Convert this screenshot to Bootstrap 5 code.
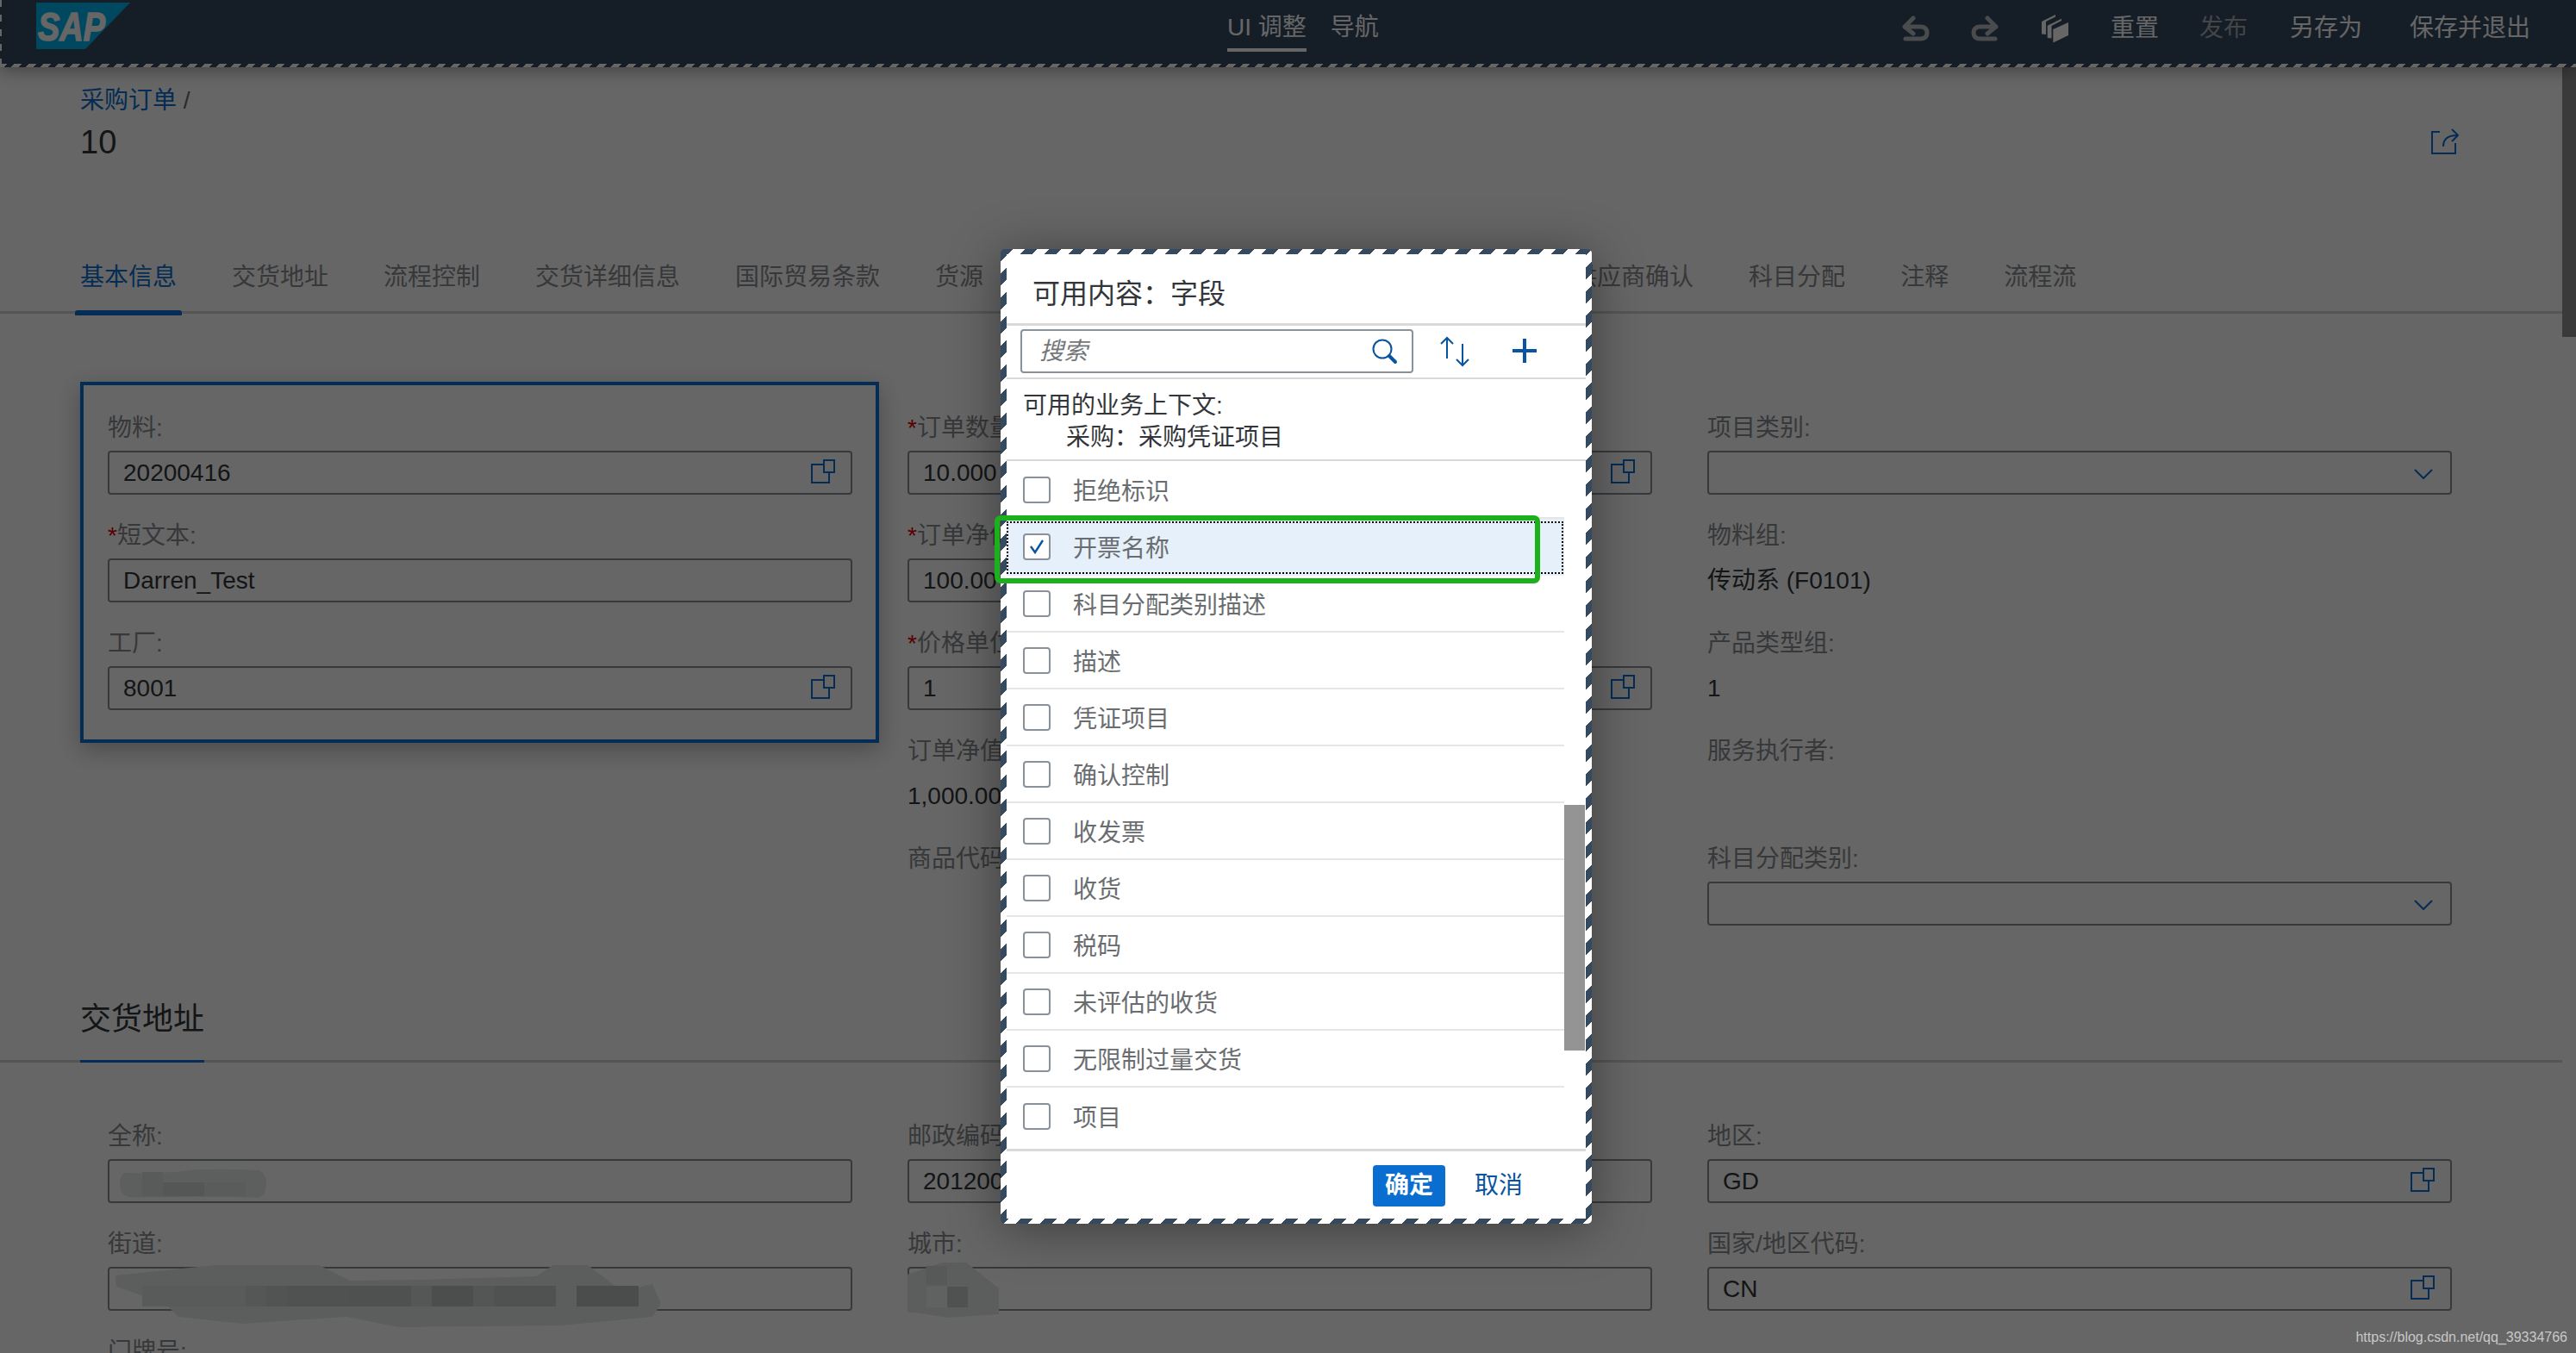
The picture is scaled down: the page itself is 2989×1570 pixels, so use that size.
<!DOCTYPE html>
<html lang="zh-CN">
<head>
    <meta charset="UTF-8">
    <meta name="viewport" content="width=device-width, initial-scale=1.0">
    <title>采购订单</title>
    <link href="https://cdn.jsdelivr.net/npm/bootstrap@5.3.3/dist/css/bootstrap.min.css" rel="stylesheet">
    <style>
        html, body { height: 100%; overflow: hidden; }
        body { background: #fff; color: #32363a; font-family: "Liberation Sans", "Noto Sans CJK SC", sans-serif; font-size: 28px; line-height: 34px; }
        .page-shell { height: 1570px; }

        /* shell bar */
        .shell-bar { height: 78px; flex: none; background: #354a63; color: #fff; position: relative; z-index: 2; box-shadow: 0 4px 18px rgba(0,0,0,.35); }
        .shell-bar::after { content: ""; position: absolute; left: 0; right: 0; bottom: 0; height: 4px; background: repeating-linear-gradient(135deg, #fff 0 6px, transparent 6px 12px); }
        .shell-bar::before { content: ""; position: absolute; left: 0; top: 0; bottom: 0; width: 2px; background: repeating-linear-gradient(180deg, #fff 0 8px, transparent 8px 17px); }
        .shell-left { width: 1424px; padding-left: 42px; align-self: flex-start; padding-top: 3px; }
        .shell-tab { margin-top: 15px; padding-bottom: 7px; margin-right: 28px; align-self: flex-start; color: #fff; }
        .shell-tab-on { border-bottom: 4px solid #fff; }
        .shell-actions { padding-right: 53px; padding-bottom: 12px; }
        .shell-actions svg { display: block; }
        .act-undo { margin-right: 48px; }
        .act-redo { margin-right: 50px; }
        .act-stack { margin-right: 48px; }
        .act-text { margin-right: 47px; }
        .act-off { color: #a8acb0; margin-right: 49px; }
        .act-gap { margin-right: 55px; }

        /* object page */
        .main-area { min-width: 0; }
        .page-head { padding: 22px 120px 0 93px; }
        .crumb-link { color: #0a6ed1; text-decoration: none; }
        .crumb-sep { color: #6a6d70; }
        .object-title { font-size: 38px; line-height: 46px; margin-top: 8px; color: #32363a; }
        .share-ico { margin-top: 49px; }
        .tab-bar { margin-top: 117px; padding-left: 93px; padding-bottom: 22px; gap: 64px; border-bottom: 3px solid #d4d4d4; flex-wrap: nowrap; }
        .tab-bar .nav-link { padding: 0; color: #8a8d90; position: relative; white-space: nowrap; }
        .tab-bar .nav-link.active { color: #0a6ed1; }
        .tab-bar .nav-link.active::after { content: ""; position: absolute; left: -6px; right: -6px; bottom: -27px; height: 6px; background: #0a6ed1; border-radius: 3px 3px 0 0; }
        .tab-spacer { width: 556px; flex: none; }
        .form-grid { grid-template-columns: repeat(3, 864px); column-gap: 64px; margin-left: 125px; margin-top: 116px; }
        .field-row { height: 125px; }
        .sap-label { display: block; color: #8a8d90; margin-bottom: 9px; white-space: nowrap; }
        .req { color: #e00000; }
        .sap-input { height: 51px; padding: 0 18px 0 16px; border: 2px solid #89919a; border-radius: 4px; background: #fff; color: #32363a; font-size: 28px; line-height: 34px; position: relative; }
        .sap-input-short { width: 460px; }
        .field-value { margin-top: 18px; color: #32363a; }
        .focus-box { margin: -37px -31px 0 -32px; padding: 33px 27px 3px 28px; border: 4px solid #0a6ed1; box-shadow: 0 8px 26px rgba(0,0,0,.28); }
        .ico-copy { width: 28px; height: 28px; flex: none; margin-top: -4px; }
        .ico-down { width: 22px; height: 12px; flex: none; margin: 3px 2px 0 0; }
        .section-title { margin-top: 56px; border-bottom: 3px solid #d4d4d4; padding-left: 93px; }
        .section-title span { display: inline-block; font-size: 36px; line-height: 44px; padding-bottom: 25px; margin-bottom: -3px; border-bottom: 3px solid #0a6ed1; color: #32363a; }
        .form-grid-addr { margin-top: 69px; }
        .smudge { position: absolute; overflow: visible; pointer-events: none; }
        .smudge-name { left: 12px; top: 9px; }
        .smudge-street { left: 7px; top: -4px; }
        .smudge-city { left: -2px; top: -7px; }
        .page-scroll { width: 16px; flex: none; }
        .page-thumb { height: 313px; background: #919191; }

        /* dim layer and dialog */
        .dim-layer { position: absolute; inset: 0; background: rgba(0,0,0,.6); z-index: 5; }
        .dialog-frame { position: absolute; left: 1161px; top: 289px; width: 686px; height: 1131px; padding: 6px 7px; z-index: 6; border-radius: 5px; background: repeating-linear-gradient(135deg, #354a5f 0 9.9px, #fff 9.9px 19.8px); box-shadow: 0 6px 60px rgba(0,0,0,.4); }
        .dialog-body { height: 100%; background: #fff; }
        .dialog-title { height: 83px; padding: 29px 0 0 30px; font-size: 32px; line-height: 34px; border-bottom: 3px solid #d9d9d9; }
        .search-row { height: 62px; padding: 4px 0 0 16px; border-bottom: 2px solid #d9d9d9; }
        .search-box { width: 456px; height: 51px; padding: 0 16px 0 20px; border: 2px solid #89919a; border-radius: 4px; }
        .search-hint { font-style: italic; color: #74777a; }
        .tool-sort { margin: 8px 0 0 30px; }
        .tool-plus { margin: 10px 0 0 48px; }
        .context-box { height: 95px; padding: 12px 0 0 19px; line-height: 37px; border-bottom: 2px solid #d9d9d9; }
        .context-sub { padding-left: 50px; }
        .list-wrap { height: 798px; padding-top: 1px; overflow: hidden; }
        .field-list { width: 647px; flex: none; }
        .field-list .list-group-item { height: 66px; padding: 6px 0 0 19px; border: 0; border-bottom: 2px solid #e5e5e5; border-radius: 0; color: #6a6d70; position: relative; background: #fff; }
        .field-list .list-group-item.row-on { background: #e5f0fa; border-bottom-color: #e5f0fa; }
        .field-list .list-group-item.row-on::after { content: ""; position: absolute; left: 0; right: 1px; top: 3px; bottom: 0; border: 2px dotted #000; }
        .field-list .form-check-input { width: 32px; height: 31px; margin: -6px 26px 0 0; border: 2px solid #89919a; border-radius: 4px; flex: none; background-color: #fff; }
        .field-list .form-check-input:checked { background-color: #fff; border-color: #89919a; background-size: 18px; background-image: url("data:image/svg+xml,%3csvg xmlns='http://www.w3.org/2000/svg' viewBox='0 0 18 18'%3e%3cpath fill='none' stroke='%230854a0' stroke-width='2.4' d='M2 9l5 7 9-14'/%3e%3c/svg%3e"); }
        .list-track { width: 25px; flex: none; }
        .list-thumb { width: 24px; height: 285px; margin-top: 398px; background: #949494; }
        .dialog-foot { height: 78px; padding: 5px 73px 0 0; gap: 34px; border-top: 3px solid #d9d9d9; }
        .btn-ok.btn { width: 84px; height: 48px; padding: 0; font-size: 28px; line-height: 34px; font-weight: 700; background: #0a6ed1; border: 0; border-radius: 4px; color: #fff; }
        .btn-no.btn { padding: 0; font-size: 28px; line-height: 34px; color: #0854a0; border: 0; text-decoration: none; }
        .green-mark { position: absolute; left: 1154px; top: 598px; width: 633px; height: 79px; border: 6px solid #1db01d; border-radius: 7px; z-index: 7; }
        .source-url { position: absolute; right: 10px; top: 1543px; font-size: 16px; line-height: 18px; color: #c8c8c8; z-index: 7; }
    </style>
</head>
<body class="position-relative">

<svg width="0" height="0" class="position-absolute">
    <symbol id="i-copy" viewBox="0 0 28 28">
        <path fill="none" stroke="#0a6ed1" stroke-width="2" d="M14 6H1v21h20V15M15 1h12v14H15z"/>
    </symbol>
    <symbol id="i-down" viewBox="0 0 22 12">
        <path fill="none" stroke="#0a6ed1" stroke-width="2" d="M1 1l10 10L21 1"/>
    </symbol>
</svg>

<div class="page-shell d-flex flex-column overflow-hidden">

    <header class="shell-bar d-flex align-items-center">
        <div class="shell-left">
            <svg width="110" height="54" viewBox="0 0 110 54">
                <polygon points="0,0 109,0 57,54 0,54" fill="#00b4f0"/>
                <text x="2" y="44" font-family="Liberation Sans" font-weight="700" font-style="italic" font-size="47" fill="#fff" stroke="#fff" stroke-width="1.500" textLength="78" lengthAdjust="spacingAndGlyphs">SAP</text>
            </svg>
        </div>
        <div class="shell-tab shell-tab-on">UI 调整</div>
        <div class="shell-tab">导航</div>
        <div class="shell-actions ms-auto d-flex align-items-center">
            <svg class="act-undo" width="32" height="30" viewBox="0 0 32 30"><path fill="none" stroke="#b8bcc0" stroke-width="5" stroke-linecap="round" stroke-linejoin="round" d="M13 3L3 13l10 8M3 13h18q8 0 8 7t-8 7H4"/></svg>
            <svg class="act-redo" width="32" height="30" viewBox="0 0 32 30"><path fill="none" stroke="#b8bcc0" stroke-width="5" stroke-linecap="round" stroke-linejoin="round" d="M19 3l10 10-10 8M29 13H11q-8 0-8 7t8 7h17"/></svg>
            <svg class="act-stack" width="32" height="33" viewBox="0 0 32 33"><path fill="#fff" d="M13.300 17L31 9v15l-17.700 8.500zM6.700 12.700L23 4.700V7l-11.500 6v14.500l-4.800-.5zM0 8l16-8v2.500L5 8v15l-5-.5z"/></svg>
            <span class="act-text">重置</span>
            <span class="act-off">发布</span>
            <span class="act-gap">另存为</span>
            <span>保存并退出</span>
        </div>
    </header>

    <div class="d-flex flex-grow-1 overflow-hidden">
        <main class="main-area flex-grow-1">
            <div class="page-head d-flex justify-content-between">
                <div>
                    <div><a class="crumb-link" href="#">采购订单</a> <span class="crumb-sep">/</span></div>
                    <div class="object-title">10</div>
                </div>
                <svg class="share-ico" width="32" height="30" viewBox="0 0 32 30">
                    <path fill="none" stroke="#0a6ed1" stroke-width="2" d="M10 4H1v25h27V17M14 21q0-13 16-13M24 1l7 7-7 7"/>
                </svg>
            </div>

            <ul class="nav tab-bar">
                <li class="nav-item"><a class="nav-link active" href="#">基本信息</a></li>
                <li class="nav-item"><a class="nav-link" href="#">交货地址</a></li>
                <li class="nav-item"><a class="nav-link" href="#">流程控制</a></li>
                <li class="nav-item"><a class="nav-link" href="#">交货详细信息</a></li>
                <li class="nav-item"><a class="nav-link" href="#">国际贸易条款</a></li>
                <li class="nav-item"><a class="nav-link" href="#">货源</a></li>
                <li class="nav-item tab-spacer"></li>
                <li class="nav-item"><a class="nav-link" href="#">供应商确认</a></li>
                <li class="nav-item"><a class="nav-link" href="#">科目分配</a></li>
                <li class="nav-item"><a class="nav-link" href="#">注释</a></li>
                <li class="nav-item"><a class="nav-link" href="#">流程流</a></li>
            </ul>

            <div class="form-grid d-grid">
                <div>
                    <div class="focus-box">
                        <div class="field-row">
                            <label class="sap-label">物料:</label>
                            <div class="form-control sap-input d-flex align-items-center justify-content-between"><span>20200416</span><svg class="ico-copy"><use href="#i-copy"/></svg></div>
                        </div>
                        <div class="field-row">
                            <label class="sap-label"><span class="req">*</span>短文本:</label>
                            <div class="form-control sap-input d-flex align-items-center"><span>Darren_Test</span></div>
                        </div>
                        <div class="field-row">
                            <label class="sap-label">工厂:</label>
                            <div class="form-control sap-input d-flex align-items-center justify-content-between"><span>8001</span><svg class="ico-copy"><use href="#i-copy"/></svg></div>
                        </div>
                    </div>
                </div>
                <div>
                    <div class="field-row">
                        <label class="sap-label"><span class="req">*</span>订单数量:</label>
                        <div class="form-control sap-input d-flex align-items-center justify-content-between"><span>10.000</span><svg class="ico-copy"><use href="#i-copy"/></svg></div>
                    </div>
                    <div class="field-row">
                        <label class="sap-label"><span class="req">*</span>订单净价:</label>
                        <div class="form-control sap-input sap-input-short d-flex align-items-center"><span>100.00</span></div>
                    </div>
                    <div class="field-row">
                        <label class="sap-label"><span class="req">*</span>价格单位:</label>
                        <div class="form-control sap-input d-flex align-items-center justify-content-between"><span>1</span><svg class="ico-copy"><use href="#i-copy"/></svg></div>
                    </div>
                    <div class="field-row">
                        <label class="sap-label">订单净值:</label>
                        <div class="field-value">1,000.00</div>
                    </div>
                    <div class="field-row">
                        <label class="sap-label">商品代码:</label>
                    </div>
                </div>
                <div>
                    <div class="field-row">
                        <label class="sap-label">项目类别:</label>
                        <div class="form-control sap-input d-flex align-items-center justify-content-end"><svg class="ico-down"><use href="#i-down"/></svg></div>
                    </div>
                    <div class="field-row">
                        <label class="sap-label">物料组:</label>
                        <div class="field-value">传动系 (F0101)</div>
                    </div>
                    <div class="field-row">
                        <label class="sap-label">产品类型组:</label>
                        <div class="field-value">1</div>
                    </div>
                    <div class="field-row">
                        <label class="sap-label">服务执行者:</label>
                    </div>
                    <div class="field-row">
                        <label class="sap-label">科目分配类别:</label>
                        <div class="form-control sap-input d-flex align-items-center justify-content-end"><svg class="ico-down"><use href="#i-down"/></svg></div>
                    </div>
                </div>
            </div>

            <div class="section-title"><span>交货地址</span></div>

            <div class="form-grid form-grid-addr d-grid">
                <div>
                    <div class="field-row">
                        <label class="sap-label">全称:</label>
                        <div class="form-control sap-input">
                            <svg class="smudge smudge-name" width="170" height="34" viewBox="0 0 170 34">
                                <path fill="#e8eeee" d="M6 5Q60 6 90 1q40-1 72 1 8 4 8 16 0 12-8 16-60-2-100-1-40 1-52 0Q0 30 0 18 0 8 6 5z"/>
                                <path fill="#dfe4e4" d="M26 4h24v28H26z"/><path fill="#d5dada" d="M50 16h48v16H50z"/><path fill="#e0e4e4" d="M98 16h48v16H98z"/>
                            </svg>
                        </div>
                    </div>
                    <div class="field-row">
                        <label class="sap-label">街道:</label>
                        <div class="form-control sap-input">
                            <svg class="smudge smudge-street" width="632" height="72" viewBox="0 0 632 72">
                                <path fill="#e6ecec" d="M0 12 116 0h120l36 18 76-1 140-4 20-13h40l40 30 35-8 10 23-10 15-105 10-190 2-60-12-120 8-75-8-15-15L1 25z"/>
                                <path fill="#dfe3e3" d="M31 24h120v24H31z"/><path fill="#d4d8d8" d="M151 24h24v24h-24z"/><path fill="#cdd1d1" d="M175 24h24v24h-24z"/><path fill="#c9cdcd" d="M199 24h72v24h-72z"/><path fill="#c5c9c9" d="M271 24h72v24h-72z"/><path fill="#d4d6d6" d="M343 24h24v24h-24z"/><path fill="#bfc3c3" d="M367 24h48v24h-48z"/><path fill="#d2d6d6" d="M415 24h24v24h-24z"/><path fill="#c7cbcb" d="M439 24h72v24h-72z"/><path fill="#bcc0c0" d="M535 24h72v24h-72z"/>
                            </svg>
                        </div>
                    </div>
                    <div class="field-row">
                        <label class="sap-label">门牌号:</label>
                    </div>
                </div>
                <div>
                    <div class="field-row">
                        <label class="sap-label">邮政编码:</label>
                        <div class="form-control sap-input d-flex align-items-center"><span>201200</span></div>
                    </div>
                    <div class="field-row">
                        <label class="sap-label">城市:</label>
                        <div class="form-control sap-input">
                            <svg class="smudge smudge-city" width="110" height="64" viewBox="0 0 110 64">
                                <path fill="#e6ecec" d="M0 14 40 0h28l38 30v30l-60 4-36-6H0z"/>
                                <path fill="#d9dddd" d="M22 4h24v22H22z"/><path fill="#f0f2f2" d="M22 28h24v24H22z"/><path fill="#c8cccc" d="M46 28h24v24H46z"/>
                            </svg>
                        </div>
                    </div>
                </div>
                <div>
                    <div class="field-row">
                        <label class="sap-label">地区:</label>
                        <div class="form-control sap-input d-flex align-items-center justify-content-between"><span>GD</span><svg class="ico-copy"><use href="#i-copy"/></svg></div>
                    </div>
                    <div class="field-row">
                        <label class="sap-label">国家/地区代码:</label>
                        <div class="form-control sap-input d-flex align-items-center justify-content-between"><span>CN</span><svg class="ico-copy"><use href="#i-copy"/></svg></div>
                    </div>
                </div>
            </div>
        </main>
        <div class="page-scroll"><div class="page-thumb"></div></div>
    </div>
</div>

<div class="dim-layer"></div>

<div class="dialog-frame">
    <div class="dialog-body d-flex flex-column">
        <div class="dialog-title">可用内容：字段</div>
        <div class="search-row d-flex align-items-start">
            <div class="search-box d-flex align-items-center justify-content-between">
                <span class="search-hint">搜索</span>
                <svg width="30" height="30" viewBox="0 0 30 30"><circle cx="12" cy="12" r="10.500" fill="none" stroke="#0854a0" stroke-width="2"/><path stroke="#0854a0" stroke-width="4" stroke-linecap="round" d="M20 20l7 7"/></svg>
            </div>
            <svg class="tool-sort" width="36" height="36" viewBox="0 0 36 36"><path fill="none" stroke="#0854a0" stroke-width="2" d="M9 26V2M2 9l7-7 7 7M27 9v25M20 27l7 7 7-7"/></svg>
            <svg class="tool-plus" width="30" height="30" viewBox="0 0 30 30"><path stroke="#0854a0" stroke-width="4" d="M15 1v28M1 15h28"/></svg>
        </div>
        <div class="context-box">
            <div>可用的业务上下文:</div>
            <div class="context-sub">采购：采购凭证项目</div>
        </div>
        <div class="list-wrap d-flex">
            <div class="list-group list-group-flush field-list">
                <label class="list-group-item d-flex align-items-center"><input class="form-check-input" type="checkbox">拒绝标识</label>
                <label class="list-group-item row-on d-flex align-items-center"><input class="form-check-input" type="checkbox" checked>开票名称</label>
                <label class="list-group-item d-flex align-items-center"><input class="form-check-input" type="checkbox">科目分配类别描述</label>
                <label class="list-group-item d-flex align-items-center"><input class="form-check-input" type="checkbox">描述</label>
                <label class="list-group-item d-flex align-items-center"><input class="form-check-input" type="checkbox">凭证项目</label>
                <label class="list-group-item d-flex align-items-center"><input class="form-check-input" type="checkbox">确认控制</label>
                <label class="list-group-item d-flex align-items-center"><input class="form-check-input" type="checkbox">收发票</label>
                <label class="list-group-item d-flex align-items-center"><input class="form-check-input" type="checkbox">收货</label>
                <label class="list-group-item d-flex align-items-center"><input class="form-check-input" type="checkbox">税码</label>
                <label class="list-group-item d-flex align-items-center"><input class="form-check-input" type="checkbox">未评估的收货</label>
                <label class="list-group-item d-flex align-items-center"><input class="form-check-input" type="checkbox">无限制过量交货</label>
                <label class="list-group-item d-flex align-items-center"><input class="form-check-input" type="checkbox">项目</label>
            </div>
            <div class="list-track"><div class="list-thumb"></div></div>
        </div>
        <div class="dialog-foot d-flex justify-content-end align-items-center">
            <button class="btn btn-ok" type="button">确定</button>
            <button class="btn btn-link btn-no" type="button">取消</button>
        </div>
    </div>
</div>

<div class="green-mark"></div>
<div class="source-url">https://blog.csdn.net/qq_39334766</div>

<script src="https://cdn.jsdelivr.net/npm/bootstrap@5.3.3/dist/js/bootstrap.bundle.min.js"></script>
</body>
</html>
